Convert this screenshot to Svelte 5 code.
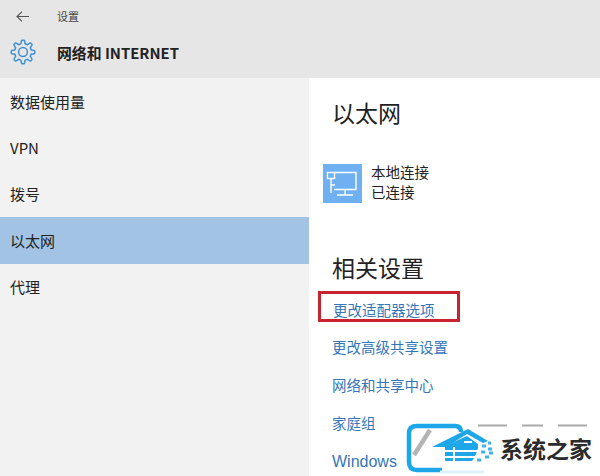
<script>
  const side = ['数据使用量', 'VPN', '拨号', '以太网', '代理'];
  const links = ['更改高级共享设置', '网络和共享中心', '家庭组'];

  function cogPath(cx, cy, rOut, rIn, teeth) {
    const step = (Math.PI * 2) / teeth;
    const pt = (r, a) => `${(cx + r * Math.cos(a)).toFixed(2)} ${(cy + r * Math.sin(a)).toFixed(2)}`;
    let d = '';
    for (let i = 0; i < teeth; i++) {
      const a = i * step - Math.PI / 2;
      const w = step * 0.2;
      d += `${i === 0 ? 'M' : 'L'}${pt(rIn, a - step * 0.3)} `;
      d += `Q${pt(rOut * 0.98, a - w * 1.1)} ${pt(rOut, a - w * 0.5)} `;
      d += `L${pt(rOut, a + w * 0.5)} `;
      d += `Q${pt(rOut * 0.98, a + w * 1.1)} ${pt(rIn, a + step * 0.3)} `;
      d += `Q${pt(rIn * 0.96, a + step * 0.5)} ${pt(rIn, a + step * 0.7)} `;
    }
    return d + 'Z';
  }
  const cog = cogPath(13, 13, 11.8, 8.6, 8);
</script>

<div class="page">
  <header class="top">
    <div class="crumb">
      <svg class="back" width="13" height="11" viewBox="0 0 13 11" fill="none" stroke="#555" stroke-width="1.1"><path d="M6 .6 1 5.500l5 4.900M1 5.500H13"/></svg>
      <span class="app">设置</span>
    </div>
    <div class="title">
      <svg class="gear" width="26" height="26" viewBox="0 0 26 26" fill="none" stroke="#3f8fd0" stroke-width="1.5" stroke-linejoin="round">
        <path d={cog}/>
        <circle cx="13" cy="13" r="4.400"/>
      </svg>
      <span>网络和 INTERNET</span>
    </div>
  </header>
  <div class="body">
    <nav class="side">
      {#each side as s, i}
        <div class="item" class:active={i === 3}>{s}</div>
      {/each}
    </nav>
    <main class="main">
      <h1>以太网</h1>
      <div class="conn">
        <div class="tile">
          <svg width="39" height="39" viewBox="0 0 39 39" fill="none" stroke="#fff" stroke-width="1.4">
            <path d="M11 8.500h22v17H11M22 25.500v5M14 31h16M8 14v15M8 21h4"/>
            <rect x="4.500" y="8.500" width="7" height="6" fill="#6eb0f2"/>
          </svg>
        </div>
        <div class="conn-text"><div>本地连接</div><div>已连接</div></div>
      </div>
      <h2>相关设置</h2>
      <div class="boxed"><a href="#a">更改适配器选项</a></div>
      <div class="links">
        {#each links as l}
          <a href="#a">{l}</a>
        {/each}
        <a href="#a" class="latin">Windows</a>
      </div>
    </main>
  </div>
  <div class="mark">
    <svg width="196" height="56" viewBox="0 0 196 56" fill="none">
      <path d="M38 50H13Q5 50 5 42V13Q5 6 13 6h38q6 0 6 6" stroke="#1ea7e8" stroke-width="4.500"/>
      <path d="M26 10 10 35" stroke="#b4b4b4" stroke-width="4.500"/>
      <path d="M28 27 64 9l20 12-5 2-16-9-21 13z" fill="#1ea7e8"/>
      <path d="M41 26 63 16l11 8v4l-1 3 -1 3 -2 4-2 3H41z" fill="#1ea7e8"/>
      <path d="M50 27v16M41 31h33M41 37h31" stroke="#fff" stroke-width="2"/>
      <path d="M60 22h8" stroke="#fff" stroke-width="2"/>
      <path d="M78 26h4M84 23h3M84 29h4M77 32h4M85 33h4M81 37h4M73 40h4" stroke="#3fb4ea" stroke-width="2.800"/>
      <path d="M36 52h44" stroke="#dff1fb" stroke-width="3"/>
      <path d="M74 5.500h29M118 5.500h21M154 5.500h29" stroke="#aaa" stroke-width="2"/>
    </svg>
    <span>系统之家</span>
  </div>
</div>

<style>
  :global(body) { margin: 0; }
  .page {
    width: 600px;
    height: 476px;
    position: relative;
    overflow: hidden;
    background: #fff;
    font-family: "Noto Sans CJK SC", "Liberation Sans", sans-serif;
    color: #222;
  }
  .top {
    height: 78px;
    background: #e6e6e6;
    box-sizing: border-box;
    padding: 7px 0 0 10px;
  }
  .crumb {
    display: flex;
    align-items: center;
    height: 18px;
  }
  .back { margin-left: 6px; }
  .app { margin-left: 28px; font-size: 11px; color: #444; }
  .title {
    display: flex;
    align-items: center;
    margin-top: 14px;
    height: 26px;
    font-size: 14.850px;
    font-weight: 700;
    color: #222;
  }
  .title span { margin-left: 21px; }
  .body { display: flex; height: 398px; }
  .side {
    width: 309px;
    background: #f2f2f2;
  }
  .item {
    height: 46.400px;
    display: flex;
    align-items: center;
    padding-left: 10px;
    font-size: 15px;
    color: #222;
  }
  .item.active { background: #a2c3e4; }
  .main { padding: 16px 0 0 23px; flex: 1; }
  h1 {
    margin: 0;
    font-size: 23px;
    font-weight: 400;
    line-height: 36px;
  }
  .conn {
    display: flex;
    align-items: center;
    margin-top: 34px;
    margin-left: -9px;
    height: 39px;
  }
  .tile {
    width: 39px;
    height: 39px;
    background: #6eb0f2;
  }
  .tile svg { display: block; }
  .conn-text {
    margin-left: 9px;
    margin-top: -4px;
    font-size: 14.500px;
    line-height: 20px;
    color: #222;
  }
  h2 {
    margin: 46px 0 0;
    font-size: 23px;
    font-weight: 400;
    line-height: 36px;
  }
  a { color: #3576b8; text-decoration: none; font-size: 14.500px; }
  .boxed {
    margin: 6px 0 0 -14px;
    width: 142px;
    height: 31px;
    box-sizing: border-box;
    border: 3px solid #c8242f;
    display: flex;
    align-items: center;
    padding: 5px 0 0 12px;
    white-space: nowrap;
  }
  .links {
    display: flex;
    flex-direction: column;
    margin-top: 15px;
    gap: 18px;
  }
  .links a { line-height: 20px; }
  .links .latin { font-family: "Liberation Sans", sans-serif; font-size: 16px; margin-top: 1px; }
  .mark {
    position: absolute;
    left: 404px;
    top: 420px;
    width: 196px;
    height: 56px;
  }
  .mark svg { display: block; }
  .mark span {
    position: absolute;
    left: 96px;
    top: 12px;
    font-size: 23px;
    font-weight: 700;
    color: #2b2b2b;
    white-space: nowrap;
    line-height: 32px;
  }
</style>
